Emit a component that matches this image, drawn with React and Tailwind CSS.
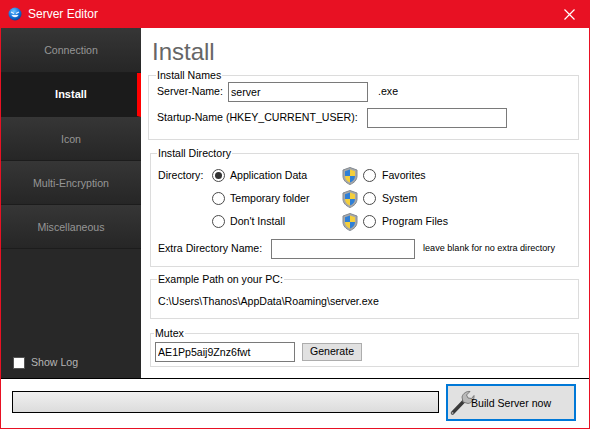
import React from 'react';

const navItems = ['Connection', 'Install', 'Icon', 'Multi-Encryption', 'Miscellaneous'];

const Shield = () => (
    <svg width="16" height="18" viewBox="0 0 16 18" className="shrink-0">
        <path d="M8 .5 L15 3 V9 C15 13 12 16 8 17.5 C4 16 1 13 1 9 V3 Z" fill="#a8a8a8" stroke="#828a92" />
        <path d="M8 2.5 V9 H3 V4.2 Z" fill="#2f7fd6" />
        <path d="M8 2.5 L13 4.2 V9 H8 Z" fill="#f4cf3c" />
        <path d="M3 9 H8 V15.5 C5 14.4 3 12.2 3 9 Z" fill="#f4cf3c" />
        <path d="M8 9 H13 C13 12.2 11 14.4 8 15.5 Z" fill="#2f7fd6" />
    </svg>
);

const Radio = ({ checked }) => (
    <span className="w-[13px] h-[13px] rounded-full border border-[#4a4a4a] bg-white flex items-center justify-center shrink-0">
        {checked && <span className="w-[7px] h-[7px] rounded-full bg-[#333333]" />}
    </span>
);

const GroupBox = ({ title, className, children }) => (
    <fieldset className={`border border-[#dcdcdc] ${className}`}>
        <legend className="-ml-px px-px h-[14px] leading-[14px]">{title}</legend>
        {children}
    </fieldset>
);

const TextBox = ({ value, className }) => (
    <input
        readOnly
        value={value}
        className={`h-[20px] border border-[#7a7a7a] bg-white px-[2px] outline-none ${className}`}
    />
);

const AppIcon = () => (
    <svg width="14" height="14" viewBox="0 0 14 14" className="shrink-0">
        <defs>
            <radialGradient id="orb" cx="40%" cy="30%" r="75%">
                <stop offset="0%" stopColor="#6cc4ff" />
                <stop offset="60%" stopColor="#1570d8" />
                <stop offset="100%" stopColor="#0b3d8c" />
            </radialGradient>
        </defs>
        <circle cx="7" cy="7" r="6.5" fill="url(#orb)" />
        <path d="M3 5 L6 6.5 M11 5 L8 6.5" stroke="#eaf4ff" strokeWidth="1.2" />
        <path d="M3.5 8 C5 11 9 11 10.5 8 Z" fill="#eaf4ff" />
    </svg>
);

const Wrench = () => (
    <svg width="26" height="26" viewBox="0 0 26 26" className="shrink-0">
        <path d="M3.5 23 L15 11" stroke="#3a3a3a" strokeWidth="3.5" strokeLinecap="round" />
        <circle cx="3.5" cy="23" r="1" fill="#aaaaaa" />
        <path d="M14 12 L13 7 C14 3 18 1 21 1.5 L17.5 5 L19 8 L22.5 8.5 L25 5.5 C25.5 9 23 13 19 13.5 Z" fill="#b9b9b9" stroke="#666666" strokeWidth="0.8" />
    </svg>
);

const App = () => {
    return (
        <div
            className="w-[590px] h-[429px] flex flex-col bg-white border border-[#e81123] border-t-0 text-[10.6px] text-black overflow-hidden"
            style={{ fontFamily: '"Liberation Sans", Arial, sans-serif' }}
        >
            {/* Title bar */}
            <div className="h-[28px] bg-[#e81123] flex items-center text-white shrink-0 pl-[7px] pr-[14px]">
                <AppIcon />
                <span className="ml-[6px] text-[12px]">Server Editor</span>
                <svg width="11" height="11" viewBox="0 0 11 11" className="ml-auto">
                    <path d="M.5 .5 L10.5 10.5 M10.5 .5 L.5 10.5" stroke="#ffffff" strokeWidth="1.2" />
                </svg>
            </div>

            <div className="flex h-[350px] shrink-0">
                {/* Sidebar */}
                <div className="w-[140px] shrink-0 bg-[#282828] flex flex-col">
                    {navItems.map((item, idx) =>
                        item === 'Install' ? (
                            <div key={idx} className="h-[44px] bg-[#1b1b1b] flex items-center text-white text-[11px] font-bold border-r-[4px] border-[#ff0000] border-b border-b-[#1b1b1b]">
                                <span className="w-full text-center pl-[4px]">{item}</span>
                            </div>
                        ) : (
                            <div
                                key={idx}
                                className={`${idx === 0 ? 'h-[45px]' : 'h-[44px]'} pt-[2px] bg-gradient-to-b from-[#363636] to-[#262626] border-b border-[#1c1c1c] flex items-center justify-center text-[#969696]`}
                            >
                                {item}
                            </div>
                        )
                    )}
                    <div className="mt-auto mb-[7px] ml-[12px] flex items-center gap-[6px] text-[#b4b4b4]">
                        <span className="w-[12px] h-[12px] bg-white border border-[#555555]" />
                        <span>Show Log</span>
                    </div>
                </div>

                {/* Install page */}
                <div className="flex-1 pl-[7px] flex flex-col">
                    <h1 className="h-[40px] pl-[4px] pt-[10px] text-[24px] leading-[28px] text-[#666666]">Install</h1>

                    <GroupBox title="Install Names" className="w-[431px] h-[72px] pl-[8px]">
                        <div className="h-[20px] flex items-center">
                            <span className="w-[71px]">Server-Name:</span>
                            <TextBox value="server" className="w-[140px]" />
                            <span className="ml-[10px]">.exe</span>
                        </div>
                        <div className="h-[20px] mt-[6px] flex items-center">
                            <span className="w-[210px]">Startup-Name (HKEY_CURRENT_USER):</span>
                            <TextBox value="" className="w-[140px]" />
                        </div>
                    </GroupBox>

                    <GroupBox title="Install Directory" className="ml-[2px] mt-[6px] w-[429px] h-[121px] pl-[7px] pt-[4px]">
                        <div className="grid grid-cols-[54px_130px_21px_1fr] auto-rows-[23px] items-center">
                            <span>Directory:</span>
                            <span className="flex items-center gap-[5px]"><Radio checked />Application Data</span>
                            <Shield />
                            <span className="flex items-center gap-[6px]"><Radio />Favorites</span>

                            <span />
                            <span className="flex items-center gap-[5px]"><Radio />Temporary folder</span>
                            <Shield />
                            <span className="flex items-center gap-[6px]"><Radio />System</span>

                            <span />
                            <span className="flex items-center gap-[5px]"><Radio />Don't Install</span>
                            <Shield />
                            <span className="flex items-center gap-[6px]"><Radio />Program Files</span>
                        </div>
                        <div className="mt-[6px] h-[20px] flex items-center">
                            <span className="w-[113px]">Extra Directory Name:</span>
                            <TextBox value="" className="w-[144px]" />
                            <span className="ml-[8px] text-[9.1px]">leave blank for no extra directory</span>
                        </div>
                    </GroupBox>

                    <GroupBox title="Example Path on your PC:" className="ml-[2px] mt-[5px] w-[429px] h-[47px] pl-[7px] pt-[7px]">
                        <div className="h-[16px] leading-[16px]">C:\Users\Thanos\AppData\Roaming\server.exe</div>
                    </GroupBox>

                    <GroupBox title="Mutex" className="ml-[2px] mt-[7px] w-[429px] h-[41px] pl-[4px] pt-[2px]">
                        <div className="flex items-center">
                            <TextBox value="AE1Pp5aij9Znz6fwt" className="w-[140px]" />
                            <button className="ml-[7px] w-[60px] h-[18px] bg-[#e1e1e1] border border-[#adadad]">Generate</button>
                        </div>
                    </GroupBox>
                </div>
            </div>

            {/* Footer */}
            <div className="flex-1 border-t border-black flex items-start pl-[11px]">
                <div className="mt-[12px] w-[427px] h-[22px] border border-black bg-gradient-to-b from-[#f0f0f0] to-[#dcdcdc]" />
                <button className="ml-[7px] mt-[5px] w-[130px] h-[37px] border-2 border-[#0078d7] bg-[#e1e1e1] flex items-center pl-[1px] text-[10.6px]">
                    <Wrench />
                    <span className="-ml-[4px] pt-[2px]">Build Server now</span>
                </button>
            </div>
        </div>
    );
};

export default App;
